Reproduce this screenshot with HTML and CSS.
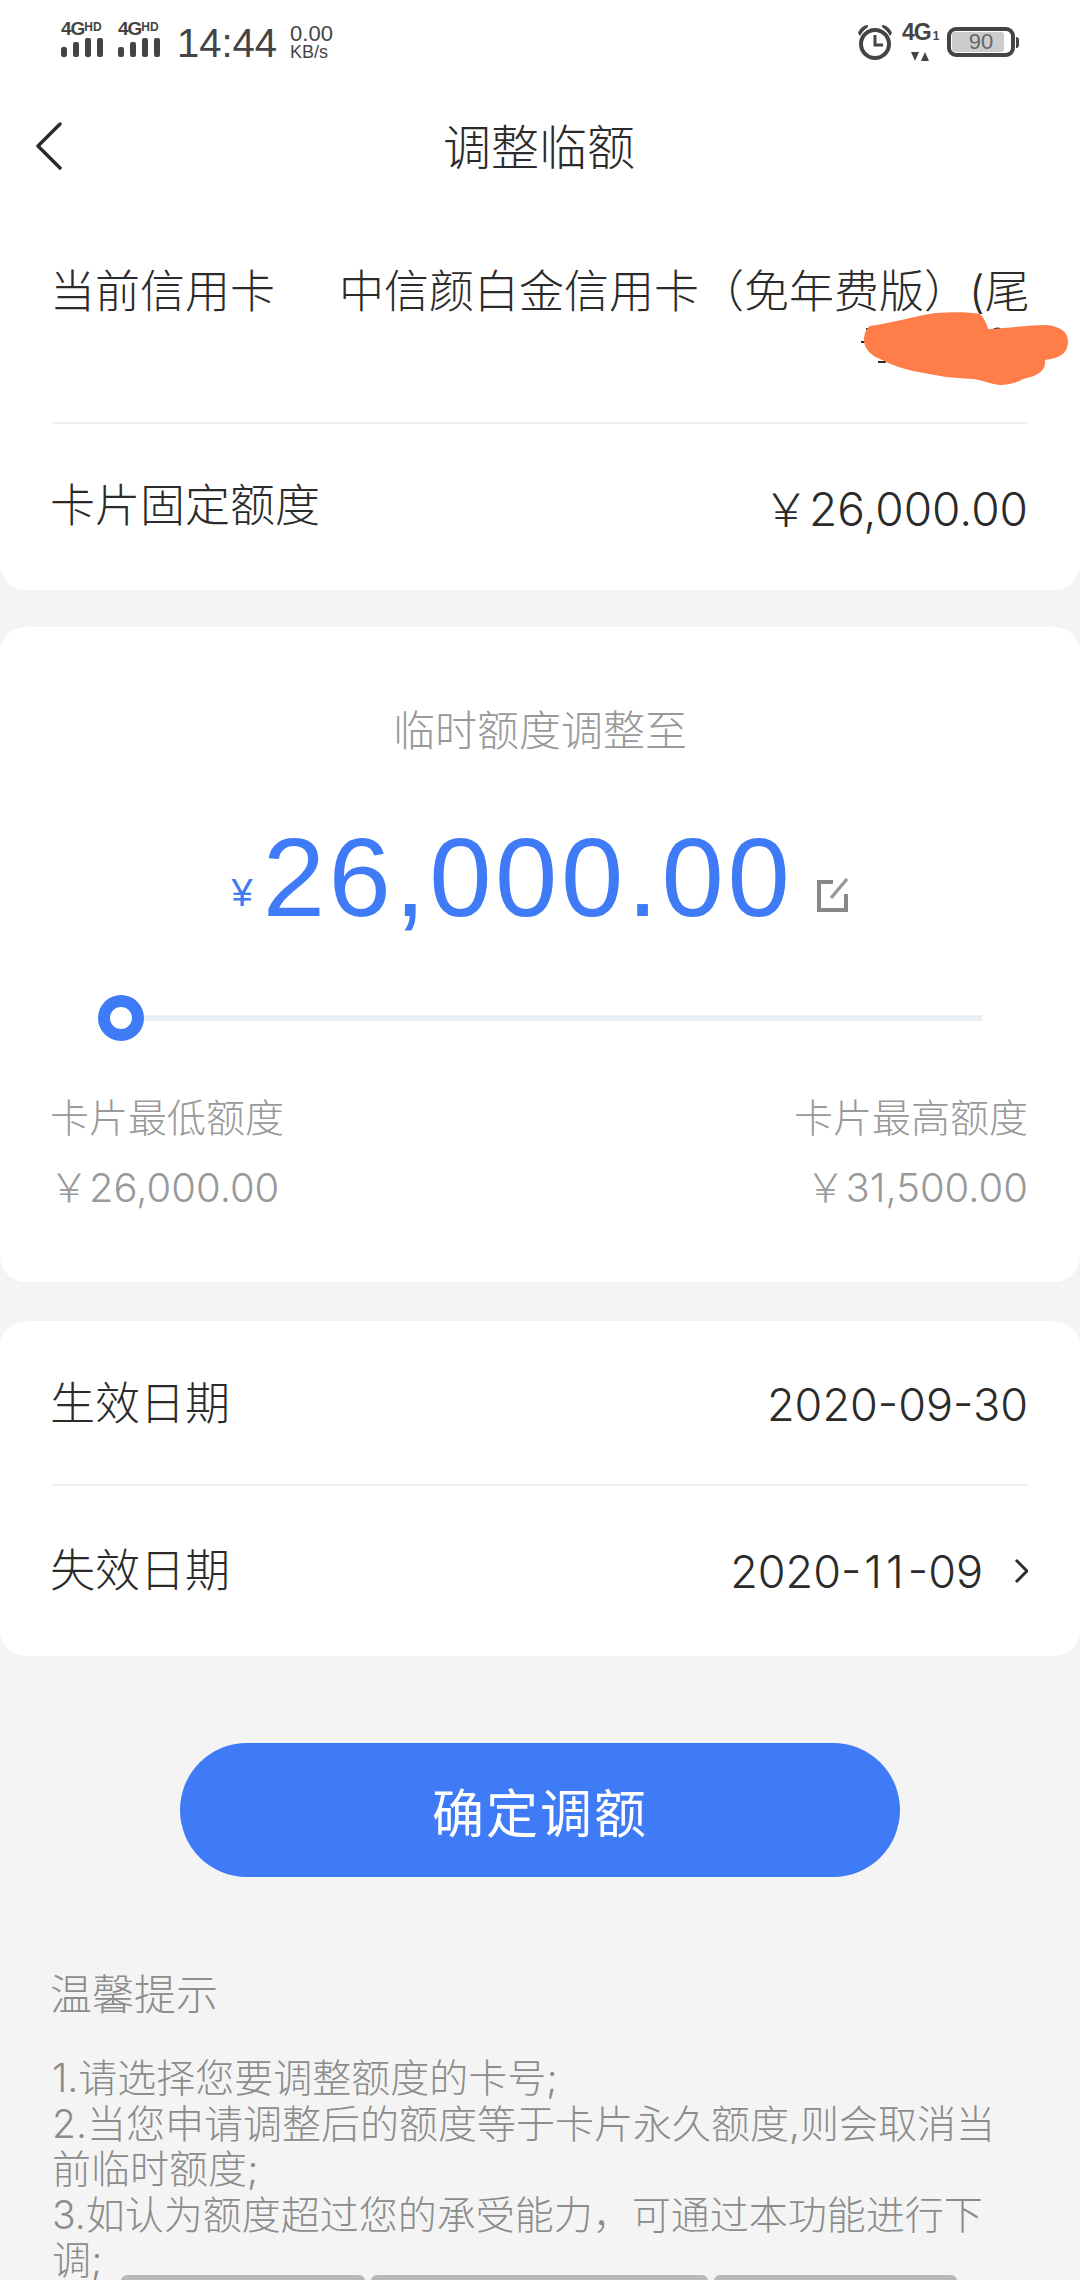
FILE: index.html
```html
<!DOCTYPE html>
<html lang="zh-CN">
<head>
  <meta charset="UTF-8">
  <meta name="viewport" content="width=device-width, initial-scale=1.0">
  <title>调整临额</title>
  <link rel="stylesheet" href="styles.css">
</head>
<body>
  <div class="page">
    <div class="status">
      <div class="status-left">
        <div class="signal">
          <div class="net">4G<sup>HD</sup></div>
          <div class="bars"><i class="b1"></i><i class="b2"></i><i class="b3"></i><i class="b4"></i></div>
        </div>
        <div class="signal">
          <div class="net">4G<sup>HD</sup></div>
          <div class="bars"><i class="b1"></i><i class="b2"></i><i class="b3"></i><i class="b4"></i></div>
        </div>
        <div class="clock">14:44</div>
        <div class="speed"><div class="speed-num">0.00</div><div class="speed-unit">KB/s</div></div>
      </div>
      <div class="status-right">
        <svg class="alarm" width="36" height="36" viewBox="0 0 36 36">
          <circle cx="18" cy="20" r="14" fill="none" stroke="#444" stroke-width="4"/>
          <path d="M18 11v10h8" fill="none" stroke="#444" stroke-width="3"/>
          <path d="M1 9 C3 4 7 1 11 1 L11 3 C8 5 5 8 3 12Z M35 9 C33 4 29 1 25 1 L25 3 C28 5 31 8 33 12Z" fill="#444"/>
        </svg>
        <div class="net-two">
          <div class="net-two-text">4G<span>1</span></div>
          <svg width="18" height="9" viewBox="0 0 18 9"><path d="M0 0h8L4 9zM10 9l4-9 4 9z" fill="#444"/></svg>
        </div>
        <div class="battery">
          <div class="battery-body"><div class="battery-fill" style="width:90%"></div><span>90</span></div>
          <div class="battery-tip"></div>
        </div>
      </div>
    </div>

    <div class="nav">
      <svg class="back" width="30" height="48" viewBox="0 0 30 48"><path d="M26 2 L4 24 L26 46" fill="none" stroke="#2b2b2b" stroke-width="3.4" stroke-linecap="round" stroke-linejoin="round"/></svg>
      <div class="nav-title">调整临额</div>
    </div>

    <div class="card card-top">
      <div class="row row-card">
        <div class="row-label">当前信用卡</div>
        <div class="card-name">中信颜白金信用卡（免年费版）(尾</div>
      </div>
      <div class="row row-fixed">
        <div class="row-label">卡片固定额度</div>
        <div class="row-value">￥26,000.00</div>
      </div>
      <!-- hand drawn cover over the card number -->
      <svg class="scribble" width="210" height="76" viewBox="-4 0 210 76">
        <path d="M2 17 h3 M-3 30 h4 M14 50 h8 M127 20 C129 17 133 16 136 17" fill="none" stroke="#2b2b2b" stroke-width="2"/>
        <path d="M0 29 C0 20 3 16 6 14 C24 12 50 4 72 1 C90 0 105 0 116 2 C120 6 123 12 124 17 C145 16 165 13 182 13 C196 14 204 20 204 29 C204 40 198 46 181 48 C182 56 178 63 159 67 C155 70 145 73 136 73 C126 72 118 68 109 67 C98 66 90 66 82 65 C70 63 60 61 49 59 C36 56 26 52 16 47 C8 44 1 38 0 29Z" fill="#fe7d48"/>
      </svg>
    </div>

    <div class="card card-limit">
      <div class="limit-title">临时额度调整至</div>
      <div class="amount">
        <span class="amount-sign">¥</span><span class="amount-num">26,000.00</span>
        <svg class="edit" width="34" height="36" viewBox="0 0 34 36">
          <path d="M17 5H3v28h27V17" fill="none" stroke="#888" stroke-width="4"/>
          <path d="M15 21 L31 2" fill="none" stroke="#999" stroke-width="3.4"/>
        </svg>
      </div>
      <div class="slider">
        <div class="thumb"></div>
        <div class="track"></div>
      </div>
      <div class="limits">
        <div>
          <div class="limit-label">卡片最低额度</div>
          <div class="limit-value">￥26,000.00</div>
        </div>
        <div class="limits-right">
          <div class="limit-label">卡片最高额度</div>
          <div class="limit-value">￥31,500.00</div>
        </div>
      </div>
    </div>

    <div class="card card-dates">
      <div class="row row-start">
        <div class="row-label">生效日期</div>
        <div class="row-value">2020-09-30</div>
      </div>
      <div class="row row-end">
        <div class="row-label">失效日期</div>
        <div class="row-value"><div>2020-<span class="ones">11</span>-09</div>
          <svg class="chevron" width="14" height="26" viewBox="0 0 14 26"><path d="M2 2 L13 13 L2 24" fill="none" stroke="#2b2b2b" stroke-width="3"/></svg>
        </div>
      </div>
    </div>

    <div class="btn-wrap"><button class="btn" type="button">确定调额</button></div>

    <div class="tips">
      <div class="tips-title">温馨提示</div>
      <div class="tips-text">
        <p>1.请选择您要调整额度的卡号;</p>
        <p>2.当您申请调整后的额度等于卡片永久额度,则会取消当前临时额度;</p>
        <p>3.如认为额度超过您的承受能力，可通过本功能进行下调;</p>
      </div>
      <div class="redact"><i class="r1"></i><i class="r2"></i><i class="r3"></i></div>
    </div>
  </div>
</body>
</html>
```

FILE: styles.css
```css
* {
  box-sizing: border-box;
}

body {
  margin: 0;
  background-color: #f4f4f4;
  font-family: "Inter", "Noto Sans CJK SC", sans-serif;
  color: #2b2b2b;
}

.page {
  width: 1080px;
  height: 2280px;
  overflow: hidden;
}

/* status bar */
.status {
  height: 66px;
  padding: 20px 60px 0 61px;
  background: #fff;
  display: flex;
  justify-content: space-between;
  color: #444;
}

.status-left,
.status-right {
  display: flex;
  align-items: flex-start;
}

.signal {
  width: 44px;
  margin-right: 13px;
}

.net {
  font-family: "Liberation Sans", sans-serif;
  font-weight: 700;
  font-size: 19px;
  line-height: 17px;
  white-space: nowrap;
  letter-spacing: -1px;
}

.net sup {
  font-size: 12px;
  line-height: 10px;
  vertical-align: 4px;
  letter-spacing: 0;
}

.bars {
  display: flex;
  align-items: flex-end;
  gap: 6px;
  height: 20px;
}

.bars i {
  display: block;
  width: 6px;
  background: #444;
  border-radius: 2px;
}

.bars .b1 { height: 10px; }
.bars .b2 { height: 15px; }
.bars .b3 { height: 19px; }
.bars .b4 { height: 19px; }

.clock {
  font-family: "Liberation Sans", sans-serif;
  font-size: 40px;
  line-height: 44px;
  margin: 1px 13px 0 2px;
}

.speed {
  font-family: "Liberation Sans", sans-serif;
  margin-top: 4px;
}

.speed-num {
  font-size: 22px;
  line-height: 20px;
}

.speed-unit {
  font-size: 18px;
  line-height: 16px;
}

.alarm {
  margin-top: 4px;
  margin-right: 9px;
}

.net-two {
  width: 36px;
  margin-right: 9px;
  text-align: center;
}

.net-two svg {
  display: block;
  margin: 4px auto 0;
}

.net-two-text {
  font-family: "Liberation Sans", sans-serif;
  font-weight: 700;
  font-size: 23px;
  line-height: 24px;
  white-space: nowrap;
  letter-spacing: -1px;
}

.net-two-text span {
  font-size: 12px;
  margin-left: 2px;
}

.battery {
  display: flex;
  align-items: center;
  margin-top: 7px;
  margin-right: 1px;
}

.battery-body {
  position: relative;
  width: 68px;
  height: 30px;
  border: 4px solid #444;
  border-radius: 9px;
  padding: 1px;
  text-align: center;
}

.battery-fill {
  height: 100%;
  background: #ccc;
  border-radius: 3px;
}

.battery-body span {
  position: absolute;
  left: 0;
  right: 0;
  top: 0;
  font-family: "Liberation Sans", sans-serif;
  font-size: 22px;
  line-height: 22px;
  color: #666;
}

.battery-tip {
  width: 3px;
  height: 11px;
  background: #444;
  border-radius: 0 3px 3px 0;
  margin-left: 1px;
}

/* nav */
.nav {
  position: relative;
  height: 144px;
  background: #fff;
  text-align: center;
}

.back {
  position: absolute;
  left: 34px;
  top: 56px;
}

.nav-title {
  font-size: 48px;
  font-weight: 300;
  line-height: 164px;
  margin-left: -2px;
}

/* cards */
.card {
  background: #fff;
  border-radius: 26px;
  padding: 0 52px;
}

.card-top {
  position: relative;
  height: 380px;
  border-radius: 0 0 26px 26px;
}

.row {
  display: flex;
  justify-content: space-between;
  align-items: center;
  font-size: 45px;
  font-weight: 300;
}

.row-value {
  display: flex;
  align-items: center;
}

.row-card {
  height: 214px;
  align-items: flex-start;
  padding-top: 55px;
  border-bottom: 2px solid #f0f0f0;
}

.row-label {
  line-height: 54px;
  margin-left: -2px;
}

.card-name {
  width: 689px;
  white-space: nowrap;
  line-height: 54px;
  text-spacing-trim: space-all;
}

.row-fixed {
  height: 164px;
}

.row-fixed .row-value {
  font-size: 46px;
}

.scribble {
  position: absolute;
  right: 10px;
  top: 102px;
}

.card-limit {
  height: 655px;
  margin-top: 37px;
  padding-top: 74px;
}

.limit-title {
  text-align: center;
  font-size: 42px;
  font-weight: 300;
  line-height: 60px;
  color: #999;
}

.amount {
  display: flex;
  justify-content: center;
  align-items: baseline;
  margin-top: 52px;
  height: 130px;
  margin-left: 2px;
  color: #3f7bf6;
}

.amount-sign {
  font-family: "Liberation Sans", sans-serif;
  font-size: 38px;
  margin-right: 10px;
  align-self: center;
  margin-top: 30px;
}

.amount-num {
  font-family: "Liberation Sans", sans-serif;
  font-size: 112px;
  line-height: 130px;
  letter-spacing: 3.6px;
}

.edit {
  margin-left: 23px;
  align-self: center;
  margin-top: 34px;
}

.slider {
  display: flex;
  align-items: center;
  margin: 52px 0 0 46px;
  height: 46px;
  padding-right: 46px;
}

.thumb {
  width: 46px;
  height: 46px;
  border: 12px solid #3f7bf6;
  border-radius: 50%;
  background: #fff;
}

.track {
  flex: 1;
  height: 6px;
  background: #e8f0f8;
}

.limits {
  display: flex;
  justify-content: space-between;
  margin-top: 50px;
  font-weight: 300;
}

.limits-right {
  text-align: right;
}

.limit-label {
  font-size: 39px;
  line-height: 54px;
  color: #999;
  margin-left: -2px;
}

.limit-value {
  font-size: 40px;
  line-height: 54px;
  margin-top: 16px;
  margin-left: -3px;
  color: #999;
}

.card-dates {
  height: 335px;
  margin-top: 39px;
}

.row-start {
  height: 165px;
  padding-top: 3px;
  border-bottom: 2px solid #f0f0f0;
}

.row-end {
  height: 170px;
}

.ones {
  letter-spacing: 4px;
  margin-left: 3px;
}

.chevron {
  margin-left: 31px;
}

/* button */
.btn-wrap {
  display: flex;
  justify-content: center;
  margin-top: 87px;
}

.btn {
  width: 720px;
  height: 134px;
  border: none;
  border-radius: 67px;
  background-color: #3f7bf6;
  color: #fff;
  font-family: "Noto Sans CJK SC", sans-serif;
  font-size: 52px;
  letter-spacing: 2px;
}

/* tips */
.tips {
  padding: 90px 52px 0;
  color: #8c8c8c;
}

.tips-title {
  font-size: 42px;
  line-height: 56px;
  font-weight: 300;
  margin-left: -2px;
}

.tips-text {
  margin-top: 32px;
  font-size: 39px;
  line-height: 45.6px;
  font-weight: 300;
}

.tips-text p {
  margin: 0;
}

.redact {
  display: flex;
  gap: 6px;
  margin: -8px 0 0 69px;
  position: relative;
}

.redact i {
  display: block;
  height: 20px;
  background: #b9b9b9;
  border-radius: 6px;
}

.r1 { width: 244px; }
.r2 { width: 337px; }
.r3 { width: 243px; }
```
